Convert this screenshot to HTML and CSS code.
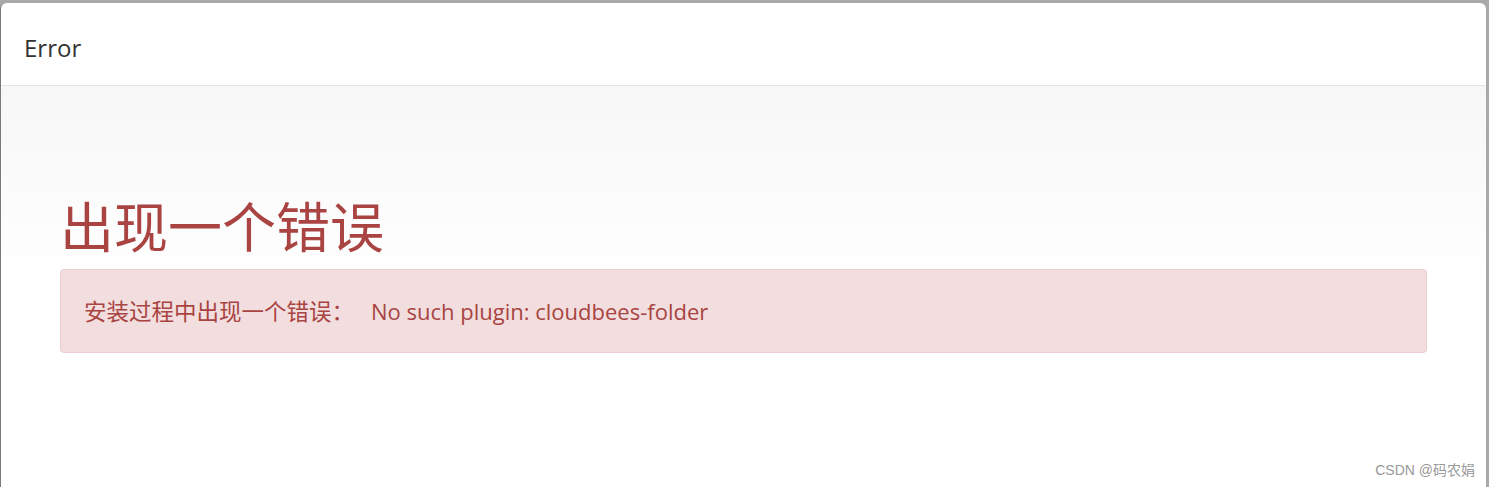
FILE: index.html
```html
<!DOCTYPE html>
<html lang="zh-CN">
<head>
<meta charset="utf-8">
<title>Error</title>
<link rel="stylesheet" href="styles.css">
</head>
<body>
<div class="frame">
  <div class="dialog">
    <div class="dialog-header">
      <h4 class="dialog-title">Error</h4>
    </div>
    <div class="dialog-body">
      <h1 class="error-title">出现一个错误</h1>
      <div class="alert"><span class="alert-label">安装过程中出现一个错误：</span>No such plugin: cloudbees-folder</div>
    </div>
  </div>
  <div class="watermark">CSDN @码农娟</div>
</div>
</body>
</html>
```

FILE: styles.css
```css
html, body {
  margin: 0;
  padding: 0;
  height: 100%;
}
body {
  background: #a9a9a9;
  font-family: "Open Sans", "Noto Sans CJK SC", sans-serif;
  overflow: hidden;
}
.frame {
  position: relative;
  height: 100%;
  padding: 3px 3px 0 0;
  box-sizing: border-box;
  display: flex;
}
.dialog {
  flex: 1;
  background: #fff;
  border-left: 1px solid #7a7a7a;
  border-radius: 6px 6px 0 0;
  display: flex;
  flex-direction: column;
  overflow: hidden;
}
.dialog-header {
  height: 82px;
  border-bottom: 1px solid #e5e5e5;
  display: flex;
  align-items: center;
  padding: 0 23px;
}
.dialog-title {
  margin: 0;
  font-size: 24px;
  font-weight: 400;
  color: #333;
  padding-top: 6px;
}
.dialog-body {
  flex: 1;
  background: linear-gradient(to bottom, #f7f7f7 0px, #fdfdfd 150px, #ffffff 200px);
  padding: 111px 59px 0 59px;
}
.error-title {
  margin: 0 0 12px 0;
  font-size: 54px;
  line-height: 60px;
  font-weight: 400;
  color: #a94442;
}
.alert {
  background: #f2dede;
  border: 1px solid #ebccd1;
  border-radius: 4px;
  color: #a94442;
  font-size: 22px;
  line-height: 32px;
  padding: 25px 23px 24px 23px;
}
.alert-label {
  font-size: 22.5px;
  margin-right: 17px;
}
.watermark {
  position: absolute;
  right: 14px;
  bottom: 8px;
  font-family: "Liberation Sans", "Noto Sans CJK SC", sans-serif;
  font-size: 14px;
  color: #999;
}
```
